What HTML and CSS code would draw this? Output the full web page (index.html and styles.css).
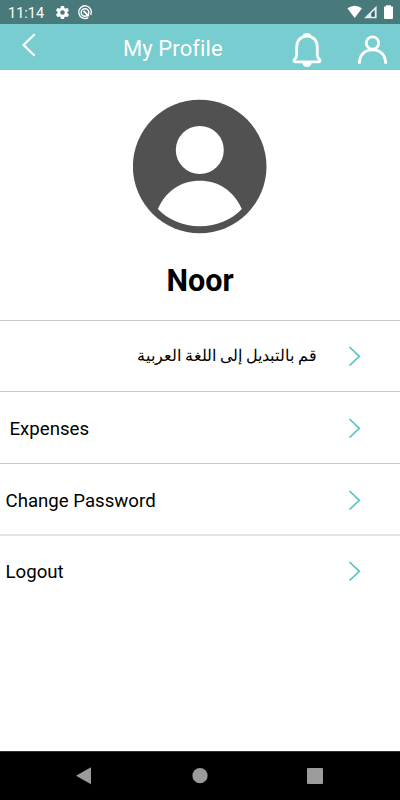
FILE: index.html
```html
<!DOCTYPE html>
<html lang="en">
<head>
<meta charset="utf-8">
<title>My Profile</title>
<link rel="stylesheet" href="styles.css">
</head>
<body>
<div class="status">
  <span class="time">11:14</span>
  <svg class="status-left" width="40" height="24" viewBox="0 0 40 24">
    <g transform="translate(.6 4.6) scale(.66)"><path fill="#fff" d="M19.4 13c0-.3.1-.6.1-1s0-.7-.1-1l2.100-1.600c.2-.2.200-.4.100-.6l-2-3.500c-.1-.2-.4-.3-.6-.2l-2.500 1c-.5-.4-1.100-.7-1.700-1l-.4-2.600c0-.3-.2-.5-.5-.5h-4c-.2 0-.4.200-.5.400l-.4 2.700c-.6.200-1.100.6-1.700 1l-2.400-1c-.3-.1-.5 0-.7.200l-2 3.500c-.1.200 0 .4.200.6L4.500 11c0 .3-.1.700-.1 1s0 .7.100 1l-2.100 1.600c-.2.2-.2.400-.1.600l2 3.500c.1.200.4.300.6.200l2.500-1c.5.400 1.100.7 1.700 1l.4 2.700c0 .2.200.400.500.400h4c.3 0 .5-.2.500-.4l.4-2.700c.6-.2 1.200-.6 1.700-1l2.500 1c.2.100.5 0 .6-.2l2-3.500c.1-.2.1-.4-.1-.6zM12 15.500a3.500 3.500 0 1 1 0-7 3.500 3.500 0 0 1 0 7z"/></g>
    <path d="M34.200 17.600a6.300 6.300 0 1 1 2.500-2.600" fill="none" stroke="#fff" stroke-width="1.400"/>
    <circle cx="31" cy="12.500" r="3.800" fill="none" stroke="#fff" stroke-width="1.500"/>
    <path d="M29.500 10.900l5.300 5.300" stroke="#fff" stroke-width="2"/>
  </svg>
  <svg class="status-right" width="48" height="24" viewBox="0 0 48 24">
    <path d="M.4 8.200Q7.600 3.200 15 8.200L7.700 18z" fill="#fff"/>
    <path d="M29.600 5.800v12.500H17z" fill="#e4eded"/><path d="M27.700 10v6.800h-3.400v-3.600z" fill="#25676b"/>
    <path d="M37 6.500h2V5.200h5v1.300h1.400q.6 0 .6.6v11q0 .9-.9.900H38q-1 0-1-.9z" fill="#fff"/>
  </svg>
</div>
<header class="bar">
  <svg class="back" width="16" height="26" viewBox="0 0 16 26"><path d="M13.600 2.200L2.600 13l11 10.800" fill="none" stroke="#fff" stroke-width="2.300"/></svg>
  <h1>My Profile</h1>
  <svg class="bell" width="30" height="36" viewBox="0 0 30 36">
    <path d="M10.500 4.800C10.600 1.600 13 1 15 1s4.400.6 4.500 3.800zM10.300 30.500h9.400C19.500 33.700 17.500 35 15 35s-4.500-1.300-4.700-4.500z" fill="#fff"/>
    <path d="M15 4.200c-6.500 0-10.300 4.700-10.300 10.500v8.600c0 1.500-.5 2.500-1.700 3.500-1.500 1.400-1.400 3 .4 3h23.200c1.800 0 1.900-1.600.4-3-1.200-1-1.700-2-1.700-3.500v-8.600C25.300 8.900 21.500 4.200 15 4.200z" fill="none" stroke="#fff" stroke-width="2.800"/>
  </svg>
  <svg class="person" width="32" height="30" viewBox="0 0 32 30"><circle cx="16.500" cy="8" r="6.200" fill="none" stroke="#fff" stroke-width="2.800"/><path d="M3.300 28.800C3.300 20 8.700 14.900 16.500 14.900S29.700 20 29.700 28.800" fill="none" stroke="#fff" stroke-width="2.900"/></svg>
</header>
<main>
  <section class="profile">
    <svg class="avatar" width="134" height="136" viewBox="133 99 134 136"><circle cx="199.700" cy="166.500" r="66.800" fill="#515151"/><circle cx="199.800" cy="150" r="24" fill="#fff"/><path d="M157.800 209C166 190.500 181.500 180.700 199.800 180.700S233.500 190.500 241.800 209C232 219.500 217 226.300 199.800 226.300S168 219.500 157.800 209z" fill="#fff"/></svg>
    <h2>Noor</h2>
  </section>
  <ul class="menu">
    <li><span class="arabic" lang="ar" dir="rtl">قم بالتبديل إلى اللغة العربية</span><svg class="chevron" viewBox="0 0 14 20"><path d="M1.500 1l9.800 9.300-9.800 9.200"/></svg></li>
    <li><span class="inset">Expenses</span><svg class="chevron" viewBox="0 0 14 20"><path d="M1.500 1l9.800 9.300-9.800 9.200"/></svg></li>
    <li><span>Change Password</span><svg class="chevron" viewBox="0 0 14 20"><path d="M1.500 1l9.800 9.300-9.800 9.200"/></svg></li>
    <li><span>Logout</span><svg class="chevron" viewBox="0 0 14 20"><path d="M1.500 1l9.800 9.300-9.800 9.200"/></svg></li>
  </ul>
</main>
<nav class="navbar">
  <svg width="400" height="48" viewBox="0 0 400 48" fill="#9b9b9b"><path d="M76 23.700L91 15.200v17z"/><circle cx="200" cy="23.700" r="7.600"/><rect x="307" y="16" width="16" height="16" rx="1"/></svg>
</nav>
</body>
</html>
```
FILE: styles.css
```css
* { box-sizing: border-box; }
body {
  margin: 0;
  height: 800px;
  display: flex;
  flex-direction: column;
  background: #fff;
  color: #000;
  font-family: Roboto, "Noto Sans", sans-serif;
  overflow: hidden;
}
svg { display: block; flex: none; }
.status {
  height: 24px;
  flex: none;
  display: flex;
  background: #48797b;
  color: #fff;
}
.time { width: 54px; padding-left: 8px; font-size: 14.5px; line-height: 27px; }
.status-right { margin-left: auto; margin-right: 5px; }
.bar {
  height: 46px;
  flex: none;
  display: flex;
  align-items: flex-start;
  background: #77cdcf;
  color: #fff;
}
.back { margin: 8px 0 0 21px; }
.bar h1 {
  margin: 0 0 0 86px;
  width: 169px;
  font-size: 22px;
  font-weight: 400;
  line-height: 49px;
  letter-spacing: .1px;
}
.bell { margin-top: 8px; }
.person { margin: 11px 0 0 34px; }
main { flex: 1; }
.profile {
  height: 250px;
  padding-top: 29px;
  display: flex;
  flex-direction: column;
  align-items: center;
}
h2 { margin: 27px 0 0; font-size: 30.5px; line-height: 37px; font-weight: 700; }
.menu { margin: 0; padding: 0; list-style: none; }
.menu li {
  height: 71.400px;
  padding: 1px 38px 0 5px;
  display: flex;
  align-items: center;
  justify-content: space-between;
  border-top: 1px solid #c8c8c8;
  font-size: 18.650px;
  line-height: 24px;
}
.menu li:first-child { padding-top: 0; }
.menu li:nth-child(3) { padding-top: 2px; }
.menu li:last-child { height: 71.500px; border-top: 2px solid #e3e3e3; }
.menu li span { padding: 2px 0 0 .5px; }
.menu li .inset { padding-left: 4.500px; }
.menu li .arabic { width: 312.500px; padding: 0 0 1px; font-size: 16.350px; white-space: nowrap; }
.chevron { width: 14px; height: 20px; }
.chevron path { fill: none; stroke: #5bc3c6; stroke-width: 1.700; }
.navbar { height: 49px; flex: none; background: #000; border-top: 1px solid #333; }
```
